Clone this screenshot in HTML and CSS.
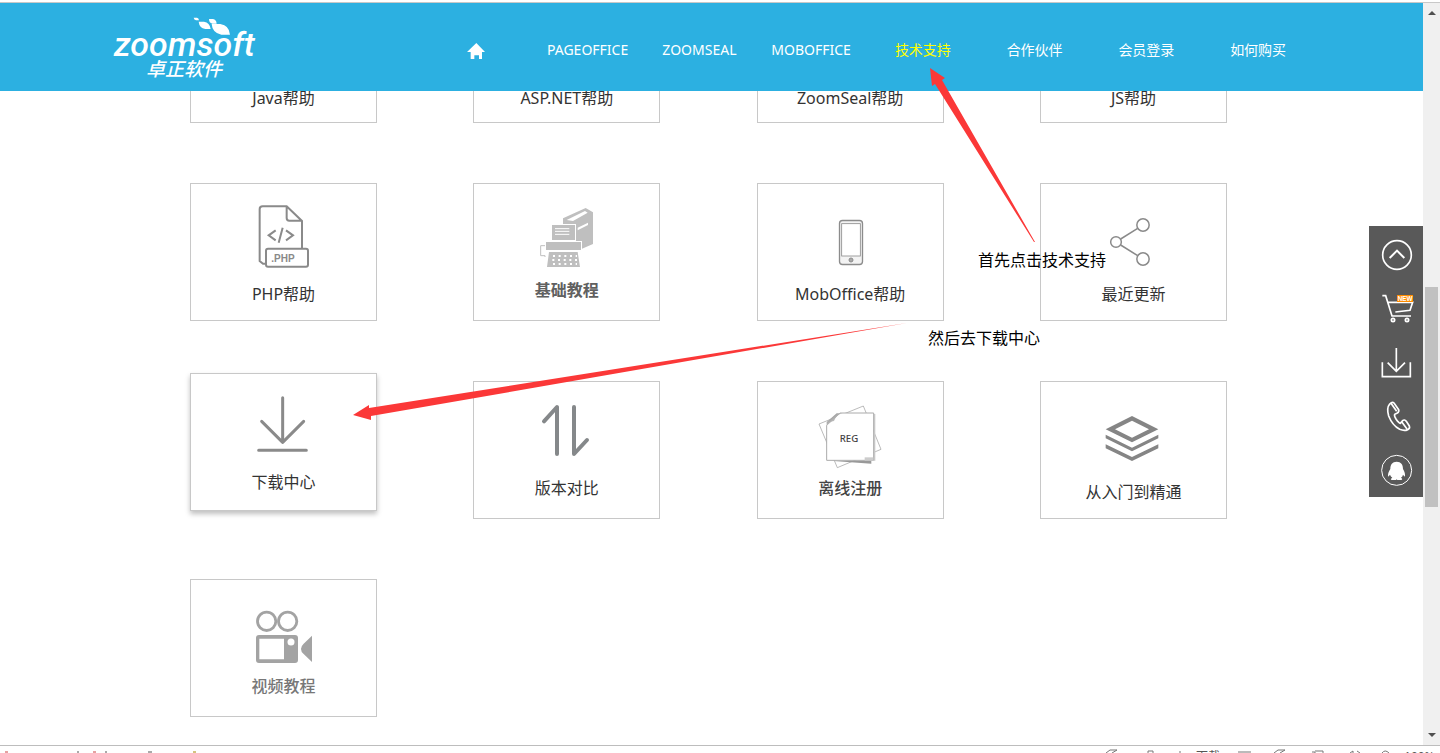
FILE: index.html
```html
<!DOCTYPE html>
<html lang="zh-CN">
<head>
<meta charset="utf-8">
<title>卓正软件 - 技术支持</title>
<link rel="stylesheet" href="styles.css">
</head>
<body>
<div class="window">
  <div class="viewport">
    <div class="page">
      <header class="header">
        <a class="logo" href="#">
          <svg class="logo-leaves" viewBox="310 52 114 56" aria-hidden="true"><path d="M312 54H322Q327 55 328 62H319Q313 61 312 54ZM358 58H370Q380 60 381 72H368Q358 70 358 58ZM327 66H343Q360 68 363 88H347Q329 85 327 66ZM366 73H392Q419 77 421 105H395Q368 100 366 73Z"/></svg>
          <span class="logo-name">zoomsoft</span>
          <span class="logo-cn">卓正软件</span>
        </a>
        <nav class="nav">
          <a href="#" aria-label="首页"><svg class="home" viewBox="1131 128 54 50"><path d="M1131 155L1159 128L1185 155H1176V177H1167V165H1153V177H1142V155Z"/></svg></a>
          <a href="#">PAGEOFFICE</a>
          <a href="#">ZOOMSEAL</a>
          <a href="#">MOBOFFICE</a>
          <a class="current" href="#">技术支持</a>
          <a href="#">合作伙伴</a>
          <a href="#">会员登录</a>
          <a href="#">如何购买</a>
        </nav>
      </header>
      <main class="content">
        <div class="cards">
          <a class="card low" href="#"><span>Java帮助</span></a>
          <a class="card low" href="#"><span>ASP.NET帮助</span></a>
          <a class="card low" href="#"><span>ZoomSeal帮助</span></a>
          <a class="card low" href="#"><span>JS帮助</span></a>

          <a class="card" href="#">
            <svg viewBox="33 42 555 282" fill="none" stroke="#8a8a8a" stroke-width="6"><path d="M258 281H249L239 273V117Q239 109 248 109H320L366 153V236M320 109V144Q320 152 328 152H366"/><rect x="258" y="236" width="126" height="54" rx="6"/><path d="M287 181L266 196L287 211M318 181L339 196L318 211M308 173L296 218"/><text class="php" x="274" y="275">.PHP</text></svg>
            <span>PHP帮助</span>
          </a>
          <a class="card high bold" href="#">
            <svg viewBox="27 42 555 282" fill="#bfbfbf"><path d="M294 145L362 114L384 127V222L351 236V213H333V162H294Z"/><path fill="#fff" d="M305 150L360 123L368 128L324 153ZM338 173L369 158V165L338 181Z"/><path d="M261 165H330V210H261Z"/><path d="M270 176H313M270 184H313M270 193H313" stroke="#fff" stroke-width="3"/><path d="M243 216H348V240H243ZM252 246H338L345 291H246Z"/><path d="M240 227H227V257H240V261" fill="none" stroke="#bfbfbf" stroke-width="3"/><path d="M264 258H336M262 270H338M264 282H336" stroke="#fff" stroke-width="6" stroke-dasharray="6 11"/></svg>
            <span>基础教程</span>
          </a>
          <a class="card" href="#">
            <svg viewBox="24 42 555 282" fill="none" stroke="#8c8c8c"><rect x="268.500" y="151.500" width="69" height="132" rx="9" fill="#f3f3f3" stroke-width="4"/><rect x="275" y="161" width="56" height="97" fill="#fff" stroke-width="2.500"/><circle cx="303" cy="270" r="6" fill="#aaa" stroke-width="3"/></svg>
            <span>MobOffice帮助</span>
          </a>
          <a class="card" href="#">
            <svg viewBox="873 42 555 282" fill="none" stroke="#8a8a8a" stroke-width="4.500"><circle cx="1098" cy="216" r="16"/><circle cx="1179" cy="165" r="18.500"/><circle cx="1179" cy="267" r="18.500"/><path d="M1112 207L1163 175M1112 225L1163 257"/></svg>
            <span>最近更新</span>
          </a>

          <a class="card raised" href="#">
            <svg viewBox="33 27 555 282" fill="none" stroke="#8a8a8a" stroke-width="9" stroke-linecap="round" stroke-linejoin="round"><path d="M308 98V232M245 169L308 232L371 169M236 256H379"/></svg>
            <span>下载中心</span>
          </a>
          <a class="card high" href="#">
            <svg viewBox="27 36 555 282" fill="none" stroke="#85888a" stroke-width="12" stroke-linecap="round" stroke-linejoin="round"><path d="M237 154L276 111V252M327 111V252L366 210"/></svg>
            <span>版本对比</span>
          </a>
          <a class="card high reg" href="#">
            <svg viewBox="24 36 555 282">
              <defs>
                <linearGradient id="curl" x1="0" y1="0" x2="1" y2="1"><stop offset="0" stop-color="#777"/><stop offset="1" stop-color="#fff"/></linearGradient>
              </defs>
              <path d="M207 162L340 108L393 238L262 293Z" fill="#fff" stroke="#999" stroke-width="2"/>
              <path d="M240 272H364V281Z" fill="#999"/>
              <path d="M374 132V272" stroke="#ccc" stroke-width="4"/>
              <path d="M230 166L270 129H371V271H230Z" fill="#fff" stroke="#aaa" stroke-width="3"/>
              <path d="M230 168V156L260 130H278Q258 135 252 153Q238 154 230 168Z" fill="url(#curl)"/>
              <path d="M344 262H370V272H344Z" fill="#ccc"/>
              <text class="regtext" x="269" y="215">REG</text>
            </svg>
            <span>离线注册</span>
          </a>
          <a class="card" href="#">
            <svg viewBox="873 36 555 282" fill="#858585"><path fill-rule="evenodd" d="M1146 138L1225 178L1146 217L1067 178ZM1146 152L1095 178L1146 203L1197 178ZM1067 194L1146 233L1225 194V205L1146 244L1067 205ZM1067 223L1146 261L1225 223V235L1146 273L1067 235Z"/></svg>
            <span>从入门到精通</span>
          </a>

          <a class="card high pale" href="#">
            <svg viewBox="33 30 555 282" fill="#a3a3a3"><g fill="none" stroke="#a3a3a3" stroke-width="8.500"><circle cx="260" cy="154" r="27.500"/><circle cx="323" cy="154" r="27.500"/></g><path fill-rule="evenodd" d="M237 195H345Q354 195 354 204V270Q354 279 345 279H237Q228 279 228 270V204Q228 195 237 195ZM238 206V268H312V206ZM396 197V276L371 252Q363 246 363 237Q363 228 371 221Z"/><circle cx="333" cy="216" r="10.500" fill="#fff"/></svg>
            <span>视频教程</span>
          </a>
        </div>
      </main>
      <aside class="tools">
        <button aria-label="返回顶部"><svg viewBox="57 33 162 162" stroke-width="5"><circle cx="141" cy="120" r="43"/><path d="M119 129L141 107L163 129" stroke-width="6"/></svg></button>
        <button aria-label="购买"><svg viewBox="57 195 162 162" stroke-width="5"><path d="M97 242H107L126 303H183M112 262H188L180 286L136 291"/><circle cx="129" cy="315" r="5"/><circle cx="171" cy="315" r="5"/><path d="M141 240H189V261H141Z" fill="#ff8c00" stroke="none"/><text class="newtext" x="143" y="257">NEW</text></svg></button>
        <button aria-label="下载"><svg viewBox="57 357 162 162" stroke-width="5"><path d="M97 442V485H181V442M139 399V468M113 443L139 469L165 443"/></svg></button>
        <button aria-label="电话"><svg viewBox="57 519 162 162" stroke-width="5"><path d="M119 567Q127 559 132 564L146 584Q148 590 142 594L134 598Q132 602 138 612Q146 624 151 625L158 617Q163 612 169 619L178 633Q181 640 173 644Q163 649 149 643Q127 631 116 603Q109 579 119 567ZM123 565L140 589M155 620L171 642"/></svg></button>
        <button aria-label="QQ客服"><svg viewBox="57 681 162 162"><circle cx="140" cy="766" r="45" stroke-width="3"/><path fill="#fff" stroke="none" d="M140 740C153 740 159 749 159 762Q168 777 164 785L159 779Q158 785 153 788Q160 792 154 795H142L140 793L138 795H125Q119 792 127 788Q122 785 120 779L115 785Q111 777 121 762C121 749 127 740 140 740Z"/></svg></button>
      </aside>
    </div>
    <div class="scrollbar" aria-hidden="true"><i class="up"></i><i class="thumb"></i><i class="down"></i></div>
  </div>
  <footer class="status">
    <svg class="marks" viewBox="0 0 200 7" fill="none"><path d="M5 6H8M93 6H96" stroke="#c44"/><path d="M77 6H79M105 6H107" stroke="#555"/><path d="M148 6H152" stroke="#555"/><path d="M193 6H196" stroke="#a80"/></svg>
    <div class="status-items">
      <svg class="icons" viewBox="1100 746 90 7" fill="none" stroke="#777"><path d="M1106 753L1110 750H1117L1112 753M1148 753V751H1153V753M1180 751V753"/></svg>
      <span>下载</span>
      <svg class="icons wide" viewBox="1226 746 170 7" fill="none" stroke="#777"><path d="M1238 752H1251M1274 753L1278 750H1285L1280 753M1312 752H1315V753M1315 751H1323V753M1350 753L1353 751V753M1357 751L1360 753M1382 753Q1385 749 1389 753"/></svg>
      <span>100%</span>
    </div>
  </footer>
  <svg class="arrows" viewBox="0 0 1440 753" aria-hidden="true"><path d="M930 68L945 78L942 80L1035 242L1034 242L935 84L932 86ZM353 415L369 405L369 408L907 323L371 416L371 420Z"/></svg>
  <p class="note first">首先点击技术支持</p>
  <p class="note second">然后去下载中心</p>
</div>
</body>
</html>
```
FILE: styles.css
```css
* { box-sizing: border-box; }
body {
  margin: 0;
  background: #fff;
  color: #333;
  font-family: "Noto Sans", "Noto Sans CJK SC", sans-serif;
  font-size: 16px;
}
a { color: inherit; text-decoration: none; }
svg { display: block; }

.window {
  position: relative;
  display: flex;
  flex-direction: column;
  height: 100vh;
  padding-top: 2px;
  overflow: hidden;
}
.viewport {
  display: flex;
  flex: 1;
  min-height: 0;
  border-top: 1px solid #c8c8c8;
}
.page {
  position: relative;
  display: flex;
  flex: 1;
  flex-direction: column;
  min-width: 0;
}

.header {
  display: flex;
  align-items: stretch;
  justify-content: space-between;
  height: 88px;
  flex: none;
  padding: 0 109px 0 114px;
  background: #2cb0e1;
  color: #fff;
}
.logo {
  position: relative;
  display: flex;
  flex-direction: column;
  width: 160px;
  padding-top: 25px;
  font-style: italic;
}
.logo-leaves {
  position: absolute;
  left: 79px;
  top: 14px;
  width: 38px;
  fill: #fff;
}
.logo-name {
  font-family: Roboto, "Liberation Sans", sans-serif;
  font-size: 34px;
  font-weight: 500;
  line-height: 32px;
}
.logo-cn {
  padding-left: 32px;
  font-size: 19px;
  font-weight: 500;
  line-height: 18px;
}
.nav {
  display: flex;
  width: 894px;
  font-size: 14px;
}
.nav a {
  display: flex;
  flex: 1;
  align-items: center;
  justify-content: center;
  padding-top: 4px;
}
.nav a:first-child { padding-top: 8px; }
.nav .current { color: #ff0; }
.home { width: 18px; fill: #fff; }

.content {
  flex: 1;
  min-height: 0;
  overflow: hidden;
}
.cards {
  display: grid;
  grid-template-columns: repeat(4, 187px);
  gap: 60px 0;
  justify-content: space-between;
  margin: -106px 196px 0 190px;
}
.card {
  display: flex;
  flex-direction: column;
  justify-content: flex-end;
  height: 138px;
  padding-bottom: 14px;
  border: 1px solid #c8c8c8;
  background: #fff;
  line-height: 24px;
  text-align: center;
}
.card svg { height: 94px; margin-bottom: auto; }
.card.high { padding-bottom: 18px; }
.card.low { padding-bottom: 12px; }
.card.bold { color: #606060; font-weight: bold; }
.card.reg { color: #444; font-weight: 500; }
.card.pale { color: #777; font-weight: 500; }
.card.raised {
  padding-bottom: 16px;
  transform: translateY(-8px);
  box-shadow: 0 3px 5px rgba(0, 0, 0, .25);
}
.php {
  fill: #8a8a8a;
  stroke: none;
  font: bold 30px "Liberation Sans", sans-serif;
}
.regtext {
  fill: #444;
  font: 500 29px "Noto Sans", sans-serif;
}
.newtext {
  fill: #fff;
  font: bold 19px "Liberation Sans", sans-serif;
}

.tools {
  position: absolute;
  right: 0;
  top: 223px;
  width: 54px;
  padding-bottom: 1px;
  background: #595959;
}
.tools button {
  display: block;
  width: 54px;
  height: 54px;
  padding: 0;
  border: 0;
  background: none;
}
.tools svg { fill: none; stroke: #fff; }
.tools .newtext { fill: #fff; stroke: none; }

.scrollbar {
  display: flex;
  flex-direction: column;
  align-items: center;
  width: 17px;
  padding: 8px 0;
  background: #f0f0f0;
}
.up, .down {
  border: 4px solid transparent;
}
.up { border-top: 0; border-bottom-color: #505050; }
.down { margin-top: auto; border-bottom: 0; border-top-color: #505050; }
.thumb {
  width: 13px;
  height: 220px;
  margin-top: 272px;
  background: #c1c1c1;
}

.status {
  display: flex;
  justify-content: space-between;
  height: 8px;
  flex: none;
  border-top: 1px solid #bdbdbd;
  overflow: hidden;
  color: #555;
  font-size: 12px;
  line-height: 16px;
}
.marks { width: 200px; height: 7px; }
.status-items { display: flex; width: 340px; }
.status-items span { padding-top: 3px; }
.icons { width: 90px; height: 7px; margin-right: 6px; }
.icons.wide { width: 170px; margin: 0 8px 0 6px; }

.arrows {
  position: absolute;
  left: 0;
  top: 0;
  width: 1440px;
  height: 753px;
  fill: #fb3838;
  pointer-events: none;
}
.note {
  position: absolute;
  margin: 0;
  color: #000;
  line-height: 24px;
}
.first { left: 978px; top: 248px; }
.second { left: 928px; top: 326px; }
```
